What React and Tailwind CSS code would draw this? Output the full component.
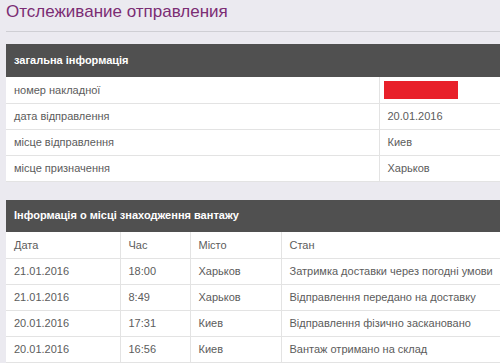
import React from 'react';

const general = [
  { label: 'номер накладної', value: null },
  { label: 'дата відправлення', value: '20.01.2016' },
  { label: 'місце відправлення', value: 'Киев' },
  { label: 'місце призначення', value: 'Харьков' },
];

const history = [
  { date: '21.01.2016', time: '18:00', city: 'Харьков', status: 'Затримка доставки через погодні умови' },
  { date: '21.01.2016', time: '8:49', city: 'Харьков', status: 'Відправлення передано на доставку' },
  { date: '20.01.2016', time: '17:31', city: 'Киев', status: 'Відправлення фізично заскановано' },
  { date: '20.01.2016', time: '16:56', city: 'Киев', status: 'Вантаж отримано на склад' },
];

function Cell({ children, className = '' }) {
  return (
    <td className={`h-[26px] px-2 border-b border-[#e3e3e3] align-middle whitespace-nowrap ${className}`}>{children}</td>
  );
}

export default function App() {
  return (
    <div className="w-[500px] h-[363px] overflow-hidden bg-[#ebeaf0] pl-[6px] font-['Liberation_Sans',Arial,sans-serif] text-[11px] text-[#5c5c5c]">
      <h1 className="h-[31px] text-[17px] leading-[23px] text-[#7b2d74]">Отслеживание отправления</h1>
      <div className="border-t border-[#cfcfd4] mb-[12px]" />

      {/* загальна інформація */}
      <table className="w-[520px] border-collapse bg-white">
        <thead>
          <tr>
            <th colSpan={2} className="h-[33px] bg-[#505050] px-2 text-left font-bold text-white text-[11px]">загальна інформація</th>
          </tr>
        </thead>
        <tbody>
          {general.map(row => (
            <tr key={row.label}>
              <Cell className="w-[373px] border-r">{row.label}</Cell>
              <Cell>
                {row.value ?? <div className="-ml-[4px] w-[74px] h-[18px] bg-[#e8202a]" />}
              </Cell>
            </tr>
          ))}
        </tbody>
      </table>

      {/* історія переміщення */}
      <table className="mt-[18px] w-[520px] border-collapse bg-white">
        <thead>
          <tr>
            <th colSpan={4} className="h-[32px] bg-[#505050] px-2 text-left font-bold text-white text-[11px]">Інформація о місці знаходження вантажу</th>
          </tr>
        </thead>
        <tbody>
          <tr>
            <Cell className="w-[114px] border-r h-[27px]">Дата</Cell>
            <Cell className="w-[70px] border-r">Час</Cell>
            <Cell className="w-[91px] border-r">Місто</Cell>
            <Cell>Стан</Cell>
          </tr>
          {history.map((row, i) => (
            <tr key={i}>
              <Cell className="border-r">{row.date}</Cell>
              <Cell className="border-r">{row.time}</Cell>
              <Cell className="border-r">{row.city}</Cell>
              <Cell>{row.status}</Cell>
            </tr>
          ))}
        </tbody>
      </table>
    </div>
  );
}
